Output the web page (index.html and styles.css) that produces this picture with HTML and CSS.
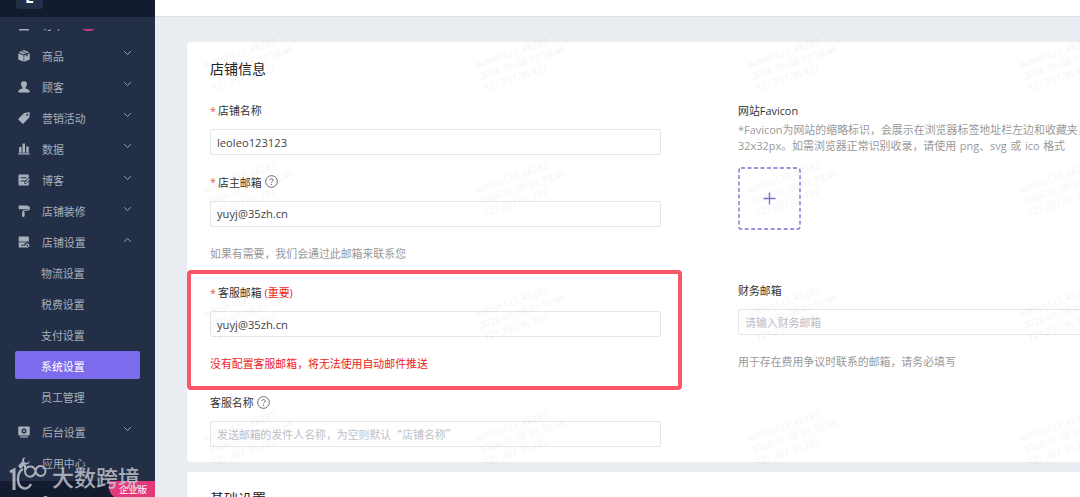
FILE: index.html
```
<!DOCTYPE html>
<html lang="zh-CN">
<head>
    <meta charset="UTF-8">
    <meta name="viewport" content="width=device-width, initial-scale=1.0">
    <title>系统设置</title>
    <link rel="stylesheet" href="styles.css">
</head>
<body>
    <svg class="symbols">
        <symbol id="down" viewBox="0 0 10 6"><path d="M1.3 1l3.7 3.7L8.7 1" fill="none" stroke="currentColor"/></symbol>
        <symbol id="help" viewBox="0 0 14 14">
            <circle cx="7" cy="7" r="6.300" fill="none" stroke="currentColor"/>
            <path d="M5.2 5.6c0-2.4 3.7-2.3 3.7 0 0 1.4-1.9 1.4-1.9 2.7" fill="none" stroke="currentColor"/>
            <circle cx="7" cy="10" r=".7" fill="currentColor"/>
        </symbol>
    </svg>

    <aside class="sidebar">
        <div class="logo-bar"><span class="logo">E</span></div>
        <nav class="menu">
            <div class="menu-item first">
                <svg class="icon" viewBox="0 0 12 12"><path d="M1 1h10v10.5H1z"/></svg>
                <span>订单</span><i class="count"></i>
            </div>
            <div class="menu-item">
                <svg class="icon" viewBox="0 0 12 12"><path d="M5.4.3L.7 2.300 5.800 4.600 8 3.600 3.500 1.700l1-.5 4.600 2 2-.9L6.500.3zM.3 3.200v6.200l5.300 2.400V5.500zM11.700 3.200L9.700 4.100v2l-1.300.6v-2L6.200 5.600v6.200l5.500-2.400z"/></svg>
                <span>商品</span><svg class="arrow"><use href="#down"/></svg>
            </div>
            <div class="menu-item">
                <svg class="icon" viewBox="0 0 12 12"><path d="M6 .3c3.500 0 3.700 3.500 1.600 6.300v.8c2.200.5 3.800 1.200 4.100 2.500.1 1-.3 1.500-1.200 1.500h-9c-.9 0-1.300-.5-1.200-1.500.3-1.300 1.900-2 4.100-2.500v-.8C2.300 3.800 2.500.3 6 .3z"/></svg>
                <span>顾客</span><svg class="arrow"><use href="#down"/></svg>
            </div>
            <div class="menu-item">
                <svg class="icon" viewBox="0 0 12 12"><path fill-rule="evenodd" d="M6.2.9L11 .3c.5 0 .8.3.8.8l-.5 4.500-5.800 5.800c-.4.4-.8.4-1.200 0L.6 7.800c-.4-.4-.4-.8 0-1.200zM9.200 2a.9.9 0 1 0 .01 0z"/></svg>
                <span>营销活动</span><svg class="arrow"><use href="#down"/></svg>
            </div>
            <div class="menu-item">
                <svg class="icon" viewBox="0 0 12 12"><path d="M1.100 4h2.500v5.800H1.100zM4.500.6H7v9.200H4.500zM8.200 3.400h2.500v6.400H8.200zM.3 10.300h11.400v1.300H.3z"/></svg>
                <span>数据</span><svg class="arrow"><use href="#down"/></svg>
            </div>
            <div class="menu-item">
                <svg class="icon" viewBox="0 0 12 12"><path fill-rule="evenodd" d="M1.500.6h8.300c.6 0 1 .4 1 1v1.700L7.500 6.600H2.700v1h4L6.200 10l2.300-.4 2.300-2.300v3.100c0 .6-.4 1-1 1H1.500c-.6 0-1-.4-1-1V1.600c0-.6.4-1 1-1zM2.700 3.200v1h5.700v-1z"/><path d="M11 4.300l.9.9-3.700 3.700-1.200.3.3-1.200z"/></svg>
                <span>博客</span><svg class="arrow"><use href="#down"/></svg>
            </div>
            <div class="menu-item">
                <svg class="icon" viewBox="0 0 12 12"><path d="M1.400.5h7.800c.4 0 .7.3.7.7h1c.5 0 .8.3.8.8v2.500c0 .4-.2.7-.6.8l-4.900.7v1.100h.4v4c0 .5-.3.8-.8.8h-.9c-.5 0-.8-.3-.8-.8v-4h.7V5.200l5.100-.8v-2h-.1v1c0 .5-.3.8-.7.8H1.400c-.4 0-.7-.3-.7-.8V1.200c0-.4.3-.7.7-.7z"/></svg>
                <span>店铺装修</span><svg class="arrow"><use href="#down"/></svg>
            </div>
            <div class="menu-item">
                <svg class="icon" viewBox="0 0 12 12"><path d="M1.600.5h8.400c.6 0 .9.3.9.8v5H8.300L6.300 8v1.800H8l.6 1.700h-7c-.6 0-.9-.4-.9-.9V1.300c0-.5.3-.8.9-.8z"/><path d="M.6 5.300c.9 1.100 2 1.100 2.700.1.700 1 1.900 1 2.600 0 .7 1 1.900 1 2.600 0 .7 1 1.800 1 2.500-.1M3 9.200h3.500" fill="none" stroke="#232f47" stroke-width=".9"/><path fill-rule="evenodd" d="M9.400 7.200l2 1.200v2.200l-2 1.200-2-1.200V8.400zM9.400 8.700a.8.8 0 1 0 .01 0z"/></svg>
                <span>店铺设置</span><svg class="arrow up"><use href="#down"/></svg>
            </div>
            <a class="sub-item">物流设置</a>
            <a class="sub-item">税费设置</a>
            <a class="sub-item">支付设置</a>
            <a class="sub-item active">系统设置</a>
            <a class="sub-item last">员工管理</a>
            <div class="menu-item">
                <svg class="icon" viewBox="0 0 12 12"><path fill-rule="evenodd" d="M.9.5h10.200c.4 0 .6.2.6.6v7.700c0 .4-.2.6-.6.6H.9c-.4 0-.6-.2-.6-.6V1.100c0-.4.2-.6.6-.6zM6 2.200L3.700 3.500v2.900L6 7.700l2.300-1.300V3.500zM6 4a1 1 0 1 1-.01 0zM2 10.300h8v1.200H2z"/></svg>
                <span>后台设置</span><svg class="arrow"><use href="#down"/></svg>
            </div>
            <div class="menu-item">
                <svg class="icon" viewBox="0 0 12 12"><path d="M7.500.5C5 .2 3.500 2.300 4.200 4.500L.6 8.300c-1 1.200 1.700 4 3 2.900l3.600-3.700c2.400.7 4.500-1 4.200-3.400L9.200 6 6.500 5.300 5.800 2.700z"/></svg>
                <span>应用中心</span>
            </div>
        </nav>
        <div class="side-footer">
            <i class="dot"></i>
            <span class="plan">企业版</span>
        </div>
    </aside>

    <main class="main">
        <header class="topbar"></header>
        <section class="card">
            <h2>店铺信息</h2>
            <div class="columns">
                <div class="column">
                    <div class="form-item">
                        <label><b>*</b>店铺名称</label>
                        <input type="text" value="leoleo123123">
                    </div>
                    <div class="form-item owner">
                        <label><b>*</b>店主邮箱<svg class="help"><use href="#help"/></svg></label>
                        <input type="text" value="yuyj@35zh.cn">
                        <p class="tip">如果有需要，我们会通过此邮箱来联系您</p>
                    </div>
                    <div class="form-item service">
                        <label><b>*</b>客服邮箱<em>(重要)</em></label>
                        <input type="text" value="yuyj@35zh.cn">
                        <p class="tip warn">没有配置客服邮箱，将无法使用自动邮件推送</p>
                    </div>
                    <div class="form-item">
                        <label>客服名称<svg class="help"><use href="#help"/></svg></label>
                        <input type="text" placeholder="发送邮箱的发件人名称，为空则默认“店铺名称”">
                    </div>
                </div>
                <div class="column wide">
                    <div class="form-item favicon">
                        <label>网站Favicon</label>
                        <p class="desc">*Favicon为网站的缩略标识，会展示在浏览器标签地址栏左边和收藏夹，<br>32x32px。如需浏览器正常识别收录，请使用 png、svg 或 ico 格式</p>
                        <div class="upload">
                            <svg viewBox="0 0 63 63"><rect x="1" y="1" width="61" height="61" rx="2" stroke-dasharray="4 2.500"/><path d="M31.500 25.500v12M25.500 31.500h12"/></svg>
                        </div>
                    </div>
                    <div class="form-item">
                        <label>财务邮箱</label>
                        <input type="text" placeholder="请输入财务邮箱">
                        <p class="tip">用于存在费用争议时联系的邮箱，请务必填写</p>
                    </div>
                </div>
            </div>
        </section>
        <section class="card">
            <h2>基础设置</h2>
        </section>
    </main>

    <svg class="watermark">
        <defs>
            <pattern id="mark" x="196" y="30" width="272" height="124.600" patternUnits="userSpaceOnUse">
                <g transform="translate(9 38) rotate(-18.500)">
                    <text x="0" y="0">admin123_48287</text>
                    <text x="0" y="12.500">2026-01-08 01:10:46</text>
                    <text x="0" y="25">121.207.36.102</text>
                </g>
            </pattern>
        </defs>
        <rect x="187" y="30" width="893" height="467" fill="url(#mark)"/>
    </svg>
    <div class="highlight"></div>
    <div class="brand">
        <svg viewBox="0 0 39 28">
            <path d="M1 9l4-2v20" stroke-width="3"/>
            <path d="M14 6c-4 2-5 6-5 10 0 11 10 12 13 5" stroke-width="2.500"/>
            <path d="M16 2v6c0 7 9 8 10.500 0 1.500-7 10-6 10 0s-8.500 7-10 0c-1.500-6-9-6-10.500 0" stroke-width="2"/>
        </svg>
        <span>大数跨境</span>
    </div>
</body>
</html>
```
FILE: styles.css
```
* {
    margin: 0;
    padding: 0;
    box-sizing: border-box;
}

body {
    display: flex;
    width: 1080px;
    height: 497px;
    overflow: hidden;
    position: relative;
    background-color: #e9ecf1;
    font-family: "Open Sans", "Noto Sans CJK SC", sans-serif;
    font-size: 10.9px;
    color: #333;
}

.symbols {
    display: none;
}

/* sidebar */
.sidebar {
    display: flex;
    flex-direction: column;
    flex: none;
    width: 155px;
    height: 497px;
    background-color: #232f47;
    color: #a9afbb;
}

.logo-bar {
    flex: none;
    height: 17px;
    margin-bottom: 12px;
    padding-left: 16px;
    background-color: #131b30;
}

.logo {
    display: flex;
    align-items: flex-end;
    justify-content: center;
    width: 27px;
    height: 9px;
    border-radius: 0 0 3px 3px;
    background-color: #232f47;
    color: #fff;
    font-size: 16px;
    font-weight: bold;
    line-height: 23px;
    overflow: hidden;
}

.menu {
    flex: 1;
    min-height: 0;
    overflow: hidden;
}

.menu-item {
    display: flex;
    align-items: center;
    height: 31.1px;
    padding: 0 23px 0 18px;
}

.menu-item.first {
    margin-top: -20px;
}

.icon {
    width: 12px;
    height: 12px;
    margin-right: 12px;
    fill: currentColor;
}

.arrow {
    width: 9px;
    height: 6px;
    margin-left: auto;
    margin-top: -5px;
}

.arrow.up {
    transform: rotate(180deg);
}

.count {
    width: 15px;
    height: 13px;
    margin-left: 17px;
    border-radius: 6px;
    background-color: #d63a7a;
}

.sub-item {
    display: flex;
    align-items: center;
    height: 28px;
    margin: 0 15px 3.1px;
    padding: 1px 0 0 26px;
    border-radius: 2px;
}

.menu-item + .sub-item {
    margin-top: .3px;
}

.sub-item.active {
    background-color: #7d6bee;
    color: #fff;
}

.sub-item.last {
    margin-bottom: 6px;
}

.side-footer {
    display: flex;
    flex: none;
    justify-content: flex-end;
    height: 16px;
    background-color: #131b30;
    overflow: hidden;
}

.dot {
    width: 5px;
    height: 5px;
    margin: 15px 61px 0 0;
    border-radius: 50%;
    background-color: #a9afbb;
}

.plan {
    width: 46px;
    height: 18px;
    border-bottom-left-radius: 12px;
    background-color: #e2397b;
    color: #fff;
    font-size: 9.3px;
    line-height: 17px;
    padding-left: 2px;
    text-align: center;
}

/* content */
.main {
    flex: 1;
    min-width: 0;
    overflow: hidden;
}

.topbar {
    height: 17px;
    margin-bottom: 25px;
    border-bottom: 1px solid #dfe2e8;
    background-color: #fff;
}

.card {
    width: 1200px;
    height: 420px;
    margin: 0 0 10px 32px;
    padding: 18px 23px;
    border-radius: 3px;
    background-color: #fff;
}

h2 {
    height: 18px;
    font-size: 14px;
    font-weight: 400;
    line-height: 18px;
    color: #222;
}

.columns {
    display: flex;
    gap: 77px;
    padding-top: 24px;
}

.column {
    width: 451px;
}

.column.wide {
    width: 600px;
}

.form-item {
    height: 71.5px;
}

.form-item.owner {
    height: 110.5px;
}

.form-item.service {
    height: 110px;
}

.form-item.favicon {
    height: 180px;
}

label {
    display: flex;
    align-items: center;
    height: 16px;
    margin-bottom: 11px;
}

label b {
    width: 8px;
    color: #e8555a;
    font-weight: 400;
}

label em {
    margin-left: 3px;
    color: #ee1c1c;
    font-style: normal;
}

.help {
    width: 13px;
    height: 13px;
    margin-left: 3px;
    color: #606266;
}

input {
    display: block;
    width: 100%;
    height: 26px;
    padding: 0 6px;
    border: 1px solid #e4e6eb;
    border-radius: 2px;
    background-color: #fff;
    color: #444;
    font-family: inherit;
    font-size: 11.2px;
}

input::placeholder {
    color: #bcc0c8;
    font-family: "Noto Sans CJK SC", sans-serif;
    font-size: 10.9px;
}

.tip {
    margin-top: 18px;
    color: #999;
    line-height: 18px;
}

.tip.warn {
    color: #ee1c1c;
}

.desc {
    margin-top: -7px;
    color: #999;
    font-size: 10.95px;
    line-height: 16px;
    white-space: nowrap;
    word-spacing: .8px;
}

.upload {
    width: 63px;
    height: 63px;
    margin-top: 13px;
}

.upload svg {
    display: block;
    fill: none;
    stroke: #8070cf;
    stroke-width: 1.4;
}

/* overlays */
.watermark {
    position: absolute;
    top: 0;
    left: 0;
    width: 1080px;
    height: 497px;
    pointer-events: none;
}

.watermark text {
    fill: rgba(0, 0, 0, 0.05);
    font-size: 9.5px;
}

.highlight {
    position: absolute;
    top: 270px;
    left: 187px;
    width: 495px;
    height: 120px;
    border: 4px solid #f85768;
    border-radius: 4px;
}

.brand {
    position: absolute;
    top: 462px;
    left: 9px;
    display: flex;
    align-items: center;
    gap: 4px;
    color: rgba(205, 208, 215, 0.8);
    font-size: 22px;
    font-weight: 500;
    line-height: 30px;
    white-space: nowrap;
}

.brand svg {
    width: 39px;
    height: 28px;
    fill: none;
    stroke: currentColor;
}
```
